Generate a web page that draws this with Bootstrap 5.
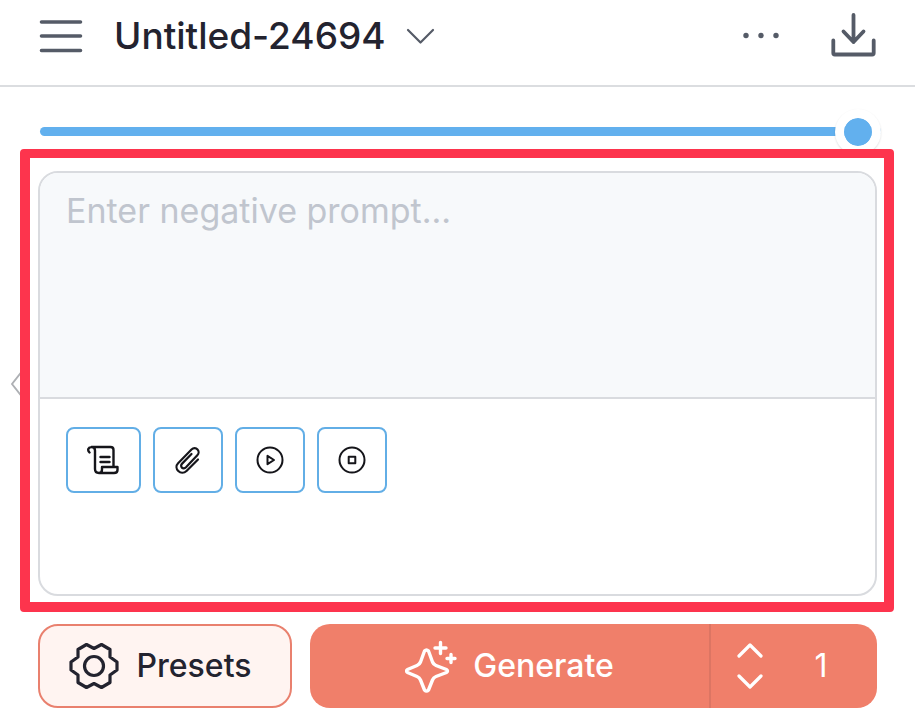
<!DOCTYPE html>
<html lang="en">
<head>
<meta charset="utf-8">
<meta name="viewport" content="width=device-width, initial-scale=1">
<title>Untitled-24694</title>
<link href="https://cdn.jsdelivr.net/npm/bootstrap@5.3.0/dist/css/bootstrap.min.css" rel="stylesheet">
<style>
  body { font-family: Inter, "Liberation Sans", sans-serif; color: #23232f; background: #fff; }
  svg { display: block; fill: none; stroke: currentColor; stroke-linecap: round; stroke-linejoin: round; flex: none; }
  button.plain { background: none; border: 0; padding: 0; color: #555b67; }
  .topbar { height: 87px; border-bottom: 2px solid #dbdde0; padding: 0 38px 13px; }
  .doc-title { font-size: 37px; line-height: 44px; font-weight: 500; margin: 0 0 0 30px; }
  .more { margin-right: 48px; }
  .slider-row { padding: 40px 34px 13px 40px; }
  .strength { display: block; height: 9px; }
  .strength::-webkit-slider-runnable-track { height: 9px; background: #62b0ee; border-radius: 5px; }
  .strength::-webkit-slider-thumb, .strength:focus::-webkit-slider-thumb {
    width: 46px; height: 46px; margin-top: -18px; background: #62b0ee; background-clip: padding-box;
    border: 9px solid #fff; border-radius: 50%; box-shadow: 0 1px 2px rgba(0,0,0,.14); }
  .highlight { margin: 0 21px 0 20px; padding: 13px 7px 6px 8px; border: 10px solid #fd344d; border-top-width: 9px; border-radius: 4px; }
  .prompt-card { border: 2px solid #d9dbdf; border-radius: 20px; overflow: hidden; }
  .prompt-input, .prompt-input:focus { height: 226px; resize: none; border: 0; border-bottom: 2px solid #d9dbdf; border-radius: 0;
    background: #f7f9fb; padding: 16px 26px; font-size: 34px; line-height: 44px; box-shadow: none; }
  .prompt-input::placeholder { color: #c0c5ce; }
  .tools { gap: 12px; padding: 28px 26px 101px; }
  .tool { width: 70px; height: 66px; padding: 0; border: 2px solid #62aee6; border-radius: 8px; color: #15151a; background: #fff; }
  .tool-wide { width: 75px; }
  .drawer { left: 10px; top: 369px; }
  button.drawer { color: #aeb0b4; }
  .actions { gap: 18px; padding: 12px 38px 15px; }
  .action { height: 84px; font-size: 32px; font-weight: 500; line-height: 40px; }
  .presets { width: 254px; gap: 18px; border: 2px solid #e9806e; border-radius: 20px; background: #fff4f1; color: #23232f; padding: 0 10px 0 0; }
  .generate-group { background: #f07f6a; border-radius: 20px; color: #fff; }
  .generate { color: #fff; gap: 16px; border: 0; border-right: 2px solid #dc7563; border-radius: 20px 0 0 20px; padding: 0; }
  .amount { width: 166px; padding-left: 25px; }
  .amount button.plain { color: #fff; }
  .amount-value { width: 60px; margin-left: 27px; padding: 0; border: 0; background: none; color: #fff; font-weight: 400; text-align: center; }
</style>
</head>
<body class="position-relative">
<header class="topbar d-flex align-items-center">
  <button class="plain" type="button" aria-label="Menu">
    <svg width="46" height="36" viewBox="0 0 46 36" stroke-width="3.600"><path d="M3.500 4h39M3.500 18h39M3.500 32.500h39"/></svg>
  </button>
  <h1 class="doc-title">Untitled-24694</h1>
  <button class="plain ms-3" type="button" aria-label="Rename document">
    <svg width="36" height="24" viewBox="0 0 36 24" stroke-width="2.200"><path d="M6 6l12.500 12.500L31 6"/></svg>
  </button>
  <button class="plain more ms-auto" type="button" aria-label="More">
    <svg width="40" height="10" viewBox="0 0 40 10"><g fill="currentColor" stroke="none"><circle cx="5" cy="4.500" r="2.700"/><circle cx="20" cy="4.500" r="2.700"/><circle cx="35" cy="4.500" r="2.700"/></g></svg>
  </button>
  <button class="plain" type="button" aria-label="Download">
    <svg width="48" height="48" viewBox="0 0 48 48" stroke-width="3.800"><path d="M24.500 3v27M14.500 19.500l10 10.500L34.500 19.500M4.300 28.500v12.500q0 1.500 1.500 1.500h37.400q1.500 0 1.500-1.500V28.500"/></svg>
  </button>
</header>
<main>
  <button class="plain drawer position-absolute" type="button" aria-label="Open panel">
    <svg width="16" height="30" viewBox="0 0 16 30" stroke-width="2"><path d="M13 1L2 15l11 14"/></svg>
  </button>
  <div class="slider-row">
    <input class="form-range strength p-0" type="range" min="0" max="100" value="100" aria-label="Strength">
  </div>
  <section class="highlight position-relative z-1">
    <div class="prompt-card">
      <textarea class="form-control prompt-input" placeholder="Enter negative prompt..." aria-label="Negative prompt"></textarea>
      <div class="tools d-flex flex-wrap">
        <button class="tool tool-wide d-flex align-items-center justify-content-center" type="button" aria-label="Prompt history">
          <svg width="34" height="32" viewBox="0 0 34 32" stroke-width="2.400"><path d="M2.500 8.500C0 6 1.500 3 4.500 3H23.500Q26.500 3 26.500 6V22.500M4.500 3Q8 3 8 6.500V25Q8 29 12 29H27Q30.500 29 30.500 26V23H15V25.500Q15 29 12 29M13.500 13h9M13.500 18h9"/></svg>
        </button>
        <button class="tool d-flex align-items-center justify-content-center" type="button" aria-label="Attach file">
          <svg width="28" height="30" viewBox="0 0 28 30" stroke-width="2.200"><path d="M24 14.500L12.500 26C10 28.400 6.500 28.200 4.300 26S1.800 20.500 4.100 18.200L17.500 4.500C19.300 2.800 22 2.800 23.500 4.400S25 8.500 23.300 10.200L12 22.300C10.800 23.500 9 23.700 7.900 22.600S6.900 19.800 8.100 18.600L17.500 9"/></svg>
        </button>
        <button class="tool d-flex align-items-center justify-content-center" type="button" aria-label="Start">
          <svg width="30" height="30" viewBox="0 0 30 30" stroke-width="2"><circle cx="15" cy="15" r="12.500"/><path d="M12.500 10.800v8.400l6.500-4.200z"/></svg>
        </button>
        <button class="tool d-flex align-items-center justify-content-center" type="button" aria-label="Stop">
          <svg width="30" height="30" viewBox="0 0 30 30" stroke-width="2"><circle cx="15" cy="15" r="12.500"/><path d="M11.700 11.700h6.600v6.600h-6.600z"/></svg>
        </button>
      </div>
    </div>
  </section>
  <div class="actions d-flex">
    <button class="action presets d-flex align-items-center justify-content-center" type="button">
      <svg width="50" height="50" viewBox="0 0 50 50" stroke-width="3.200"><circle cx="25" cy="25" r="9.500"/><path d="M17.500 3.500L25 7.500l7.500-4L41 8.500V16l7 5v8l-7 5v7.500l-8.500 5L25 42.500l-7.500 4L9 41.500V34l-7-5v-8l7-5V8.500z"/></svg>
      <span>Presets</span>
    </button>
    <div class="generate-group action d-flex flex-grow-1">
      <button class="generate action bg-transparent d-flex flex-grow-1 align-items-center justify-content-center" type="button">
        <svg width="52" height="54" viewBox="0 0 52 54" stroke-width="3.400"><path d="M19.500 12Q21.500 10 23.500 12L27.500 23Q28.500 25.500 31 26.500L41.500 30.500Q43.500 32 41.500 33.500L31 37.500Q28.500 38.500 27.500 41L23.500 51Q21.500 53 19.500 51L15.500 41Q14.500 38.500 12 37.500L2.500 33.500Q.500 32 2.500 30.500L12 26.500Q14.500 25.500 15.500 23z"/><path d="M35.500 3.500v11M30 9h11M46 15.500v8M42 19.500h8"/></svg>
        <span>Generate</span>
      </button>
      <div class="amount d-flex align-items-center">
        <div class="d-flex flex-column gap-3">
          <button class="plain" type="button" aria-label="Increase amount">
            <svg width="28" height="16" viewBox="0 0 28 16" stroke-width="3.200"><path d="M3 14L14 3l11 11"/></svg>
          </button>
          <button class="plain" type="button" aria-label="Decrease amount">
            <svg width="28" height="16" viewBox="0 0 28 16" stroke-width="3.200"><path d="M3 2l11 11L25 2"/></svg>
          </button>
        </div>
        <input class="amount-value" type="text" inputmode="numeric" value="1" aria-label="Amount">
      </div>
    </div>
  </div>
</main>
<script src="https://cdn.jsdelivr.net/npm/bootstrap@5.3.0/dist/js/bootstrap.bundle.min.js"></script>
</body>
</html>
